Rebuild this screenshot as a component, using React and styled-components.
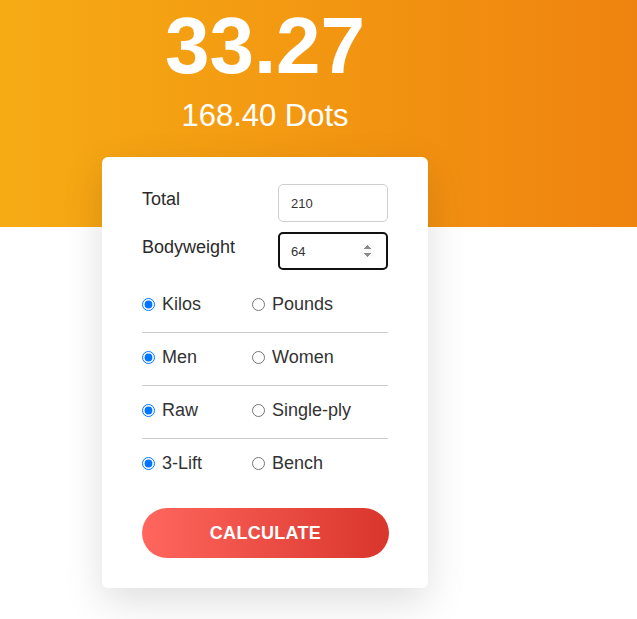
import React, { useState } from "react";
import styled, { createGlobalStyle } from "styled-components";

const GlobalStyle = createGlobalStyle`
  body {
    margin: 0;
    background: #fff;
    font-family: "Liberation Sans", Arial, sans-serif;
  }
`;

const options = [
  { name: "unit", values: ["Kilos", "Pounds"] },
  { name: "sex", values: ["Men", "Women"] },
  { name: "equipment", values: ["Raw", "Single-ply"] },
  { name: "event", values: ["3-Lift", "Bench"] },
];

const App = () => {
  const [total, setTotal] = useState("210");
  const [bodyweight, setBodyweight] = useState("64");
  const [picked, setPicked] = useState({
    unit: "Kilos",
    sex: "Men",
    equipment: "Raw",
    event: "3-Lift",
  });

  return (
    <Page>
      <GlobalStyle />
      <Column>
        <Score>33.27</Score>
        <Dots>168.40 Dots</Dots>
        <Card>
          <Field>
            <Label>Total</Label>
            <Input
              type="number"
              value={total}
              onChange={(e) => setTotal(e.target.value)}
            />
          </Field>
          <Field>
            <Label>Bodyweight</Label>
            <Input
              type="number"
              autoFocus
              value={bodyweight}
              onChange={(e) => setBodyweight(e.target.value)}
            />
          </Field>
          <Groups>
            {options.map((group) => (
              <RadioRow key={group.name}>
                {group.values.map((value) => (
                  <Choice key={value}>
                    <Radio
                      type="radio"
                      name={group.name}
                      checked={picked[group.name] === value}
                      onChange={() =>
                        setPicked({ ...picked, [group.name]: value })
                      }
                    />
                    {value}
                  </Choice>
                ))}
              </RadioRow>
            ))}
          </Groups>
          <Button>CALCULATE</Button>
        </Card>
      </Column>
    </Page>
  );
};

const Page = styled.div`
  min-height: 619px;
  background-image: linear-gradient(to right, #f6ab14, #ef830f);
  background-size: 100% 227px;
  background-repeat: no-repeat;
  padding-left: 102px;
  padding-top: 6px;
  box-sizing: border-box;
`;

const Column = styled.div`
  width: 326px;
  display: flex;
  flex-direction: column;
  align-items: center;
`;

const Score = styled.div`
  color: #fff;
  font-size: 80px;
  font-weight: bold;
  line-height: 1;
`;

const Dots = styled.div`
  color: #fff;
  font-size: 31px;
  line-height: 1;
  margin-top: 14px;
`;

const Card = styled.div`
  align-self: stretch;
  margin-top: 26px;
  background: #fff;
  border-radius: 6px;
  box-shadow: 0 14px 40px rgba(0, 0, 0, 0.13);
  padding: 27px 40px 30px;
  display: flex;
  flex-direction: column;
`;

const Field = styled.div`
  display: grid;
  grid-template-columns: 136px 110px;
  align-items: start;
  & + & {
    margin-top: 10px;
  }
`;

const Label = styled.label`
  color: #2b2b2b;
  font-size: 18px;
  margin-top: 5px;
`;

const Input = styled.input`
  box-sizing: border-box;
  width: 110px;
  height: 38px;
  border: 1px solid #cfcfcf;
  border-radius: 5px;
  padding: 0 12px;
  font-family: "Liberation Sans", Arial, sans-serif;
  font-size: 13px;
  color: #333;
  background: #fff;

  &::-webkit-inner-spin-button {
    opacity: 0;
  }
  &:focus {
    outline: none;
    border: 2px solid #111;
    padding: 0 11px;
  }
  &:focus::-webkit-inner-spin-button {
    opacity: 1;
  }
`;

const Groups = styled.div`
  margin-top: 10px;
  display: flex;
  flex-direction: column;
`;

const RadioRow = styled.div`
  box-sizing: border-box;
  height: 53px;
  padding-bottom: 3px;
  display: grid;
  grid-template-columns: 110px 1fr;
  align-items: center;
  border-bottom: 1px solid #cccccc;
  &:last-child {
    border-bottom: none;
    height: 52px;
  }
`;

const Choice = styled.label`
  display: flex;
  align-items: center;
  gap: 7px;
  color: #333;
  font-size: 18px;
`;

const Radio = styled.input`
  margin: 0;
  width: 13px;
  height: 13px;
  accent-color: #0075ff;
`;

const Button = styled.button`
  margin-top: 17px;
  height: 50px;
  width: 247px;
  border: none;
  border-radius: 25px;
  background: linear-gradient(to right, #ff665e, #d9362c);
  color: #fff;
  font-family: "Liberation Sans", Arial, sans-serif;
  font-size: 18px;
  font-weight: bold;
  letter-spacing: 0.3px;
  cursor: pointer;
`;

export default App;
